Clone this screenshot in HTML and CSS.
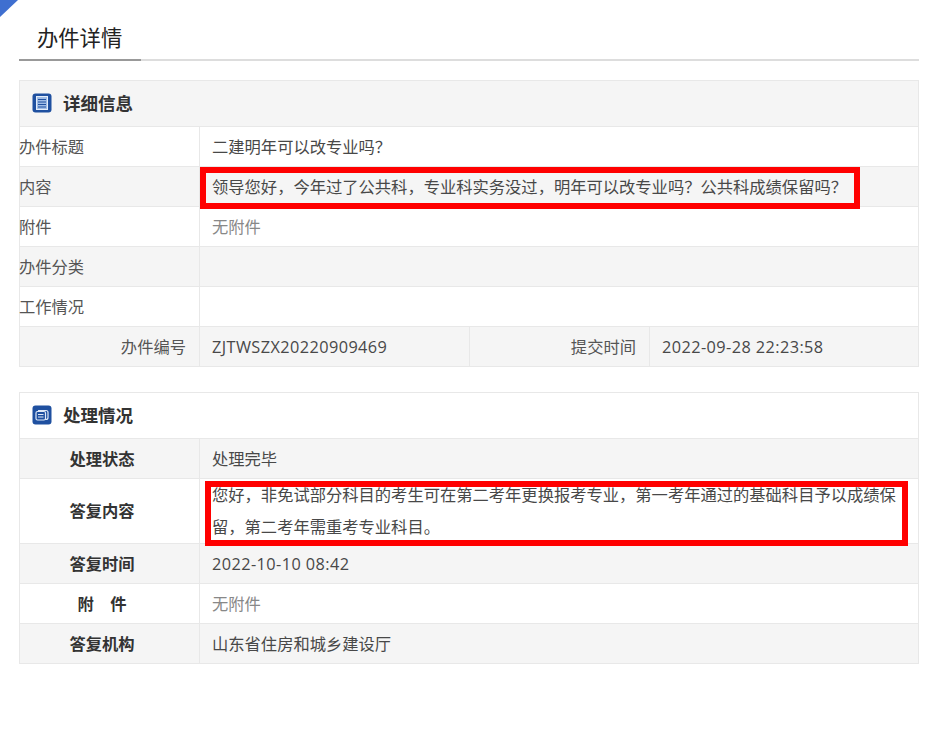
FILE: index.html
```html
<!DOCTYPE html>
<html lang="zh-CN">
<head>
<meta charset="utf-8">
<title>办件详情</title>
<link rel="stylesheet" href="styles.css">
</head>
<body>
<svg class="corner" width="20" height="18" viewBox="0 0 20 18"><polygon points="0,0 18,0 0,17" fill="#3f6fd0"/></svg>
<main class="page">
  <div class="tabbar"><h1 class="tab">办件详情</h1></div>

  <section class="panel first">
    <header class="panel-head">
      <svg class="icon" width="20" height="20" viewBox="0 0 20 20"><rect width="19" height="19" x="0.5" y="0.5" rx="3" fill="#1f50a0"/><rect x="4.500" y="3.500" width="11" height="13" fill="#9fbce6" stroke="#e4edf9"/><path d="M6 6.500h8M6 9h8M6 11.500h8M6 14h8" stroke="#1f50a0" stroke-width="1"/></svg>
      <h2 class="panel-title">详细信息</h2>
    </header>
    <div class="row"><div class="cell label left">办件标题</div><div class="cell value">二建明年可以改专业吗？</div></div>
    <div class="row alt"><div class="cell label left">内容</div><div class="cell value">领导您好，今年过了公共科，专业科实务没过，明年可以改专业吗？公共科成绩保留吗？</div></div>
    <div class="row"><div class="cell label left">附件</div><div class="cell value muted">无附件</div></div>
    <div class="row alt"><div class="cell label left">办件分类</div><div class="cell value"></div></div>
    <div class="row"><div class="cell label left">工作情况</div><div class="cell value"></div></div>
    <div class="row alt four"><div class="cell label right">办件编号</div><div class="cell value latin">ZJTWSZX20220909469</div><div class="cell label right">提交时间</div><div class="cell value latin">2022-09-28 22:23:58</div></div>
    <div class="mark mark-one"></div>
  </section>

  <section class="panel second">
    <header class="panel-head white">
      <svg class="icon" width="20" height="20" viewBox="0 0 20 20"><rect width="19" height="19" x="0.5" y="0.5" rx="3" fill="#1f50a0"/><path d="M6 5.500h8a2 2 0 0 1 2 2v5a2 2 0 0 1-2 2h-1" fill="none" stroke="#dfe9f7" stroke-width="1.200"/><rect x="4" y="6.500" width="9.500" height="8.500" rx="1.500" fill="#1f50a0" stroke="#dfe9f7" stroke-width="1.200"/><path d="M6 9.500h5.500M6 12h5.500" stroke="#dfe9f7"/></svg>
      <h2 class="panel-title">处理情况</h2>
    </header>
    <div class="row alt"><div class="cell label center">处理状态</div><div class="cell value">处理完毕</div></div>
    <div class="row tall"><div class="cell label center">答复内容</div><div class="cell value">您好，非免试部分科目的考生可在第二考年更换报考专业，第一考年通过的基础科目予以成绩保留，第二考年需重考专业科目。</div></div>
    <div class="row alt"><div class="cell label center">答复时间</div><div class="cell value latin">2022-10-10 08:42</div></div>
    <div class="row"><div class="cell label center">附&emsp;件</div><div class="cell value muted">无附件</div></div>
    <div class="row alt"><div class="cell label center">答复机构</div><div class="cell value">山东省住房和城乡建设厅</div></div>
    <div class="mark mark-two"></div>
  </section>
</main>
</body>
</html>
```
FILE: styles.css
```css
* { box-sizing: border-box; }
html, body { margin: 0; padding: 0; background: #fff; }
body {
  font-family: "Open Sans", "Noto Sans CJK SC", sans-serif;
  font-size: 16.3px;
  color: #333;
  width: 934px;
  height: 733px;
  overflow: hidden;
  position: relative;
}
.corner { position: absolute; left: 0; top: 0; }
.page { padding: 0 15px 0 19px; }
.tabbar { height: 61px; border-bottom: 2px solid #ddd; display: flex; align-items: flex-end; }
.tab {
  margin: 0 0 -2px;
  width: 122px;
  height: 43px;
  padding-left: 18px;
  font-size: 21.3px;
  font-weight: 400;
  line-height: 39px;
  color: #222;
  border-bottom: 2px solid #999;
}
.panel { position: relative; border: 1px solid #e8e8e8; border-bottom: 0; }
.first { margin-top: 19px; }
.second { margin-top: 25px; }
.panel-head {
  height: 45px;
  display: flex;
  align-items: center;
  gap: 11px;
  padding: 0 0 1px 12px;
  background: #f5f5f5;
}
.panel-head.white { background: #fff; }
.panel-title { margin: 0 0 1px; font-size: 17.5px; font-weight: 700; color: #333; }
.icon { flex: none; }
.row {
  display: grid;
  grid-template-columns: 179px 1fr;
  height: 40px;
  border-top: 1px solid #e8e8e8;
}
.row:nth-last-child(2) { height: 41px; border-bottom: 1px solid #e8e8e8; }
.row.four { grid-template-columns: 179px 270px 180px 1fr; }
.row.tall { height: 65px; }
.alt { background: #f5f5f5; }
.cell { display: flex; align-items: center; min-width: 0; border-left: 1px solid #e8e8e8; color: #555; }
.cell:first-child { border-left: 0; }
.label { padding-bottom: 1px; }
.label.left { justify-content: flex-start; margin-left: -1px; }
.label.right { justify-content: flex-end; padding-right: 13px; }
.label.center { justify-content: center; padding-right: 15px; font-weight: 700; color: #333; }
.tall .label { padding-bottom: 3px; }
.value { padding-left: 12px; line-height: 32px; color: #484848; }
.latin { letter-spacing: 0.42px; }
.tall .value { align-items: flex-start; }
.muted { color: #888; }
.mark { position: absolute; border: 6px solid #f00; pointer-events: none; }
.mark-one { left: 180px; top: 86px; width: 660px; height: 42px; }
.mark-two { left: 185px; top: 88px; width: 703px; height: 65px; }
```
